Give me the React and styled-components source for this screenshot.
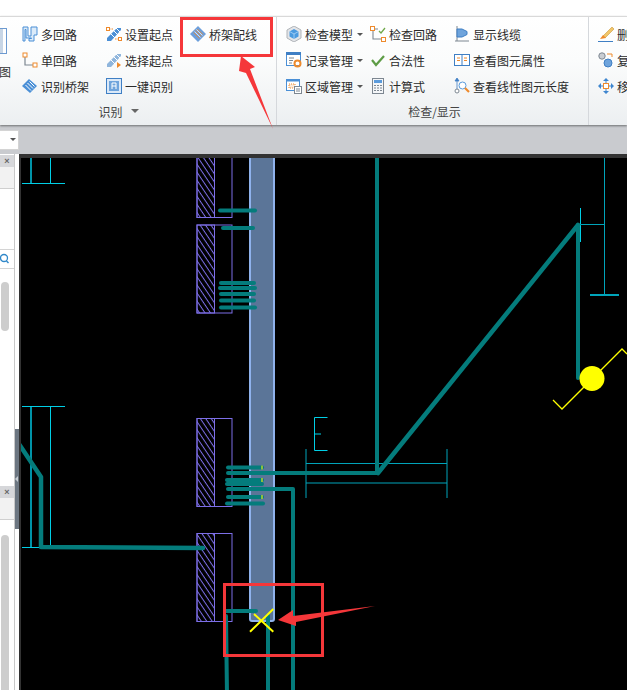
import React from "react";
import styled, { createGlobalStyle } from "styled-components";

const Global = createGlobalStyle`
  html, body {
    margin: 0;
    width: 627px;
    height: 690px;
    overflow: hidden;
    background: #fff;
    font-family: "Noto Sans CJK SC", "Liberation Sans", sans-serif;
  }
`;

const Page = styled.div`
  position: relative;
  width: 627px;
  height: 690px;
  overflow: hidden;
  display: flex;
  flex-direction: column;
`;
const TopStrip = styled.div`
  height: 16px;
  background: #fff;
`;
const Ribbon = styled.div`
  display: flex;
  flex: none;
  height: 109px;
  box-sizing: border-box;
  border-top: 1px solid #d9d9d9;
  background: linear-gradient(#ffffff, #fbfcfc 40%, #eceff1);
  box-shadow: 0 1px 2px rgba(0, 0, 0, 0.45);
  position: relative;
  z-index: 1;
`;
const Group = styled.div`
  flex: none;
  box-sizing: border-box;
  width: ${(p) => p.$width}px;
  padding-left: ${(p) => p.$pad}px;
  padding-top: 4px;
  display: flex;
  flex-direction: column;
  position: relative;
  border-right: ${(p) => (p.$last ? "none" : "1px solid #d5d8dc")};
`;
const Tools = styled.div`
  display: flex;
  height: 78px;
`;
const Big = styled.div`
  flex: none;
  width: 22px;
  margin-left: -22px;
  overflow: hidden;
  display: flex;
  flex-direction: column;
  align-items: flex-end;
`;
const BigBox = styled.div`
  width: 7px;
  height: 26px;
  margin: 7px 15px 0 0;
  box-sizing: border-box;
  border: 1px solid #6d9ad0;
  border-left: none;
  background: linear-gradient(90deg, #c8d6e6 0 3px, #fff 3px);
`;
const BigText = styled.div`
  width: 22px;
  font-size: 12px;
  line-height: 16px;
  margin-top: 10px;
  color: #333;
  text-indent: -1px;
`;
const Column = styled.div`
  flex: none;
  width: 84px;
  display: flex;
  flex-direction: column;
`;
const Item = styled.div`
  display: flex;
  align-items: center;
  height: 26px;
  gap: 3px;
  font-size: 12px;
  color: #2b2b2b;
  white-space: nowrap;
`;
const Caret = styled.span`
  width: 0;
  height: 0;
  margin-left: 1px;
  border-left: 3px solid transparent;
  border-right: 3px solid transparent;
  border-top: 3px solid #555;
`;
const GroupLabel = styled.div`
  display: flex;
  align-items: center;
  justify-content: center;
  gap: 7px;
  height: 20px;
  margin-top: 2px;
  margin-left: ${(p) => p.$shift || 0}px;
  font-size: 12px;
  color: #444;
  white-space: nowrap;
`;
const LabelCaret = styled(Caret)`
  border-left-width: 4px;
  border-right-width: 4px;
  border-top-width: 4px;
  border-top-color: #666;
`;
const Band = styled.div`
  flex: none;
  height: 29px;
  background: #c9cbcf;
  display: flex;
  align-items: center;
`;
const Combo = styled.div`
  width: 19px;
  height: 20px;
  box-sizing: border-box;
  background: #fff;
  border: 1px solid #d4d4d4;
  border-left: none;
  display: flex;
  align-items: center;
  justify-content: flex-end;
  padding-right: 2px;
`;
const Body = styled.div`
  flex: 1;
  min-height: 0;
  display: flex;
`;
const Sidebar = styled.div`
  flex: none;
  width: 15px;
  box-sizing: border-box;
  padding-top: 1px;
  border-right: 1px solid #c8c8c8;
  display: flex;
  flex-direction: column;
  background: #fff;
`;
const Panel = styled.div`
  flex: none;
  height: ${(p) => p.$height}px;
  overflow: hidden;
`;
const PanelHead = styled.div`
  height: 12px;
  background: #d6d7da;
  color: #666;
  font: bold 9px/12px "Liberation Sans", sans-serif;
  text-align: center;
`;
const PanelTabs = styled.div`
  height: 21px;
  background: #f2f2f2;
  border-bottom: 1px solid #cfcfcf;
`;
const PanelSearch = styled.div`
  margin-top: 60px;
  height: 18px;
  border-top: 1px solid #d4d4d4;
  border-bottom: 1px solid #d4d4d4;
  display: flex;
  align-items: center;
`;
const Thumb = styled.div`
  width: 8px;
  height: ${(p) => p.$height}px;
  margin: ${(p) => p.$top}px 0 0 1px;
  background: #cdcdcd;
  border-radius: 4px;
`;
const Splitter = styled.div`
  flex: none;
  width: 4px;
  background: #fff;
`;
const Handle = styled.div`
  width: 4px;
  height: 100px;
  margin-top: 275px;
  background: #6c7681;
  display: flex;
  align-items: center;
`;
const HandleArrow = styled.span`
  width: 0;
  height: 0;
  border-top: 3px solid transparent;
  border-bottom: 3px solid transparent;
  border-right: 3px solid #c6ccd2;
`;
const Canvas = styled.div`
  flex: 1;
  min-width: 0;
  border-top: 4px solid #333;
  border-left: 2px solid #333;
  background: #000;
`;
const Drawing = styled.svg`
  display: block;
`;
const Marks = styled.svg`
  position: absolute;
  left: 0;
  top: 0;
  z-index: 2;
  pointer-events: none;
`;

const Ico = ({ children }) => (
  <svg width="16" height="16" viewBox="0 0 16 16" fill="none" style={{ flex: "none" }}>
    {children}
  </svg>
);

const BLUE = "#4a8fd6";
const ORANGE = "#ee8a2c";
const GREY = "#7d8791";

const MultiLoop = () => (
  <Ico>
    <path d="M1 15V1h5v9h3V1h6v8h-3v6H7v-2.500h2.500V12H4V3.500H3V15z" fill="#dcebf9" stroke={BLUE} strokeWidth="1" />
  </Ico>
);
const SingleLoop = () => (
  <Ico>
    <path d="M3 5v8h8" stroke={GREY} strokeWidth="1.200" />
    <rect x="1" y="1" width="4" height="4" fill="#fff" stroke={ORANGE} />
    <rect x="11" y="11" width="4" height="4" fill="#fff" stroke={ORANGE} />
  </Ico>
);
const Tray = () => (
  <Ico>
    <path d="M0 8l7-7 8 7-7 7z" fill={BLUE} />
    <path d="M3.500 7l5.500 5.500M5.500 5l5.500 5.500M7.500 3.500l5 5" stroke="#fff" strokeWidth="1" />
  </Ico>
);
const SetStart = ({ pale }) => (
  <Ico>
    <path d="M1 12L11 2h4v2L5 15H1z" fill={pale ? "#8fb5dc" : BLUE} />
    <path d="M4 7l5 5M7 4l5 5M10 2l4 4" stroke="#fff" strokeWidth="1" />
    {pale ? (
      <path d="M11 10l4 3-4 3z" fill={ORANGE} />
    ) : (
      <>
        <path d="M3 3h4M9 13h4" stroke={ORANGE} strokeDasharray="1.500 1" />
        <rect x="0.500" y="1.500" width="3" height="3" fill="#fff" stroke={ORANGE} />
        <rect x="12.500" y="11.500" width="3" height="3" fill="#fff" stroke={ORANGE} />
      </>
    )}
  </Ico>
);
const OneKey = () => (
  <Ico>
    <rect x="0.500" y="0.500" width="15" height="15" fill="#dbe9f8" stroke="#3f7fc4" />
    <rect x="3" y="3" width="10" height="10" fill="#6fa4dc" />
    <path d="M6 11V5h4v6M6 8h4" stroke="#fff" strokeWidth="1" />
  </Ico>
);
const Wiring = () => (
  <Ico>
    <path d="M0 8l8-8 8 8-8 8z" fill="#6d9fdc" />
    <path d="M3.500 6.500l6 6M5.500 4.500l6 6M7.500 3l5.500 5.500" stroke={ORANGE} strokeWidth="0.800" />
    <path d="M4.500 5.500l6 6M6.500 3.500l6 6" stroke="#fff" strokeWidth="0.700" />
  </Ico>
);
const Model = () => (
  <Ico>
    <path d="M8 0l7 4v8l-7 4-7-4V4z" fill="#e3e5e8" stroke="#b0b4b9" />
    <path d="M8 3l4.500 2.500v5L8 13l-4.500-2.500v-5z" fill="#4c9be0" />
    <path d="M3.500 5.500L8 8l4.500-2.500M8 8v5" stroke="#bfe0fa" strokeWidth="0.700" />
  </Ico>
);
const Records = () => (
  <Ico>
    <rect x="0.500" y="0.500" width="14" height="13" fill="#fff" stroke="#4a8fd6" />
    <rect x="0" y="0" width="15" height="3" fill="#3f7fc4" />
    <path d="M3 6h5M3 8.500h4M3 11h3" stroke={GREY} />
    <circle cx="11.500" cy="11.500" r="3" fill="none" stroke={ORANGE} strokeWidth="2" />
  </Ico>
);
const Area = () => (
  <Ico>
    <rect x="0.500" y="1.500" width="13" height="11" fill="#fff" stroke="#4a8fd6" />
    <rect x="0" y="1" width="14" height="2.500" fill="#4a8fd6" />
    <rect x="3" y="6" width="6" height="4" fill="#fbe9d8" stroke={ORANGE} strokeDasharray="1 1" />
    <rect x="8.500" y="8.500" width="7" height="7" fill="#fff" stroke={GREY} />
    <path d="M10 11h4M10 13h4" stroke={GREY} />
  </Ico>
);
const CheckLoop = () => (
  <Ico>
    <path d="M3 4v9h9M5 3h3" stroke={GREY} strokeWidth="1.100" />
    <rect x="0.500" y="0.500" width="4" height="4" fill="#fff" stroke={ORANGE} />
    <rect x="11.500" y="11.500" width="4" height="4" fill="#fff" stroke={ORANGE} />
    <path d="M9 5l2 2 4-5" stroke="#6fa84a" strokeWidth="1.300" />
  </Ico>
);
const Valid = () => (
  <Ico>
    <path d="M2 8l4 5 8-9" stroke="#5e9c46" strokeWidth="2.200" />
  </Ico>
);
const Calc = () => (
  <Ico>
    <rect x="2.500" y="0.500" width="11" height="15" fill="#f4f6f8" stroke={GREY} />
    <rect x="4" y="2" width="8" height="3" fill="#5a9bdc" />
    <path d="M4 7.500h2M7 7.500h2M10 7.500h2M4 10h2M7 10h2M10 10h2M4 12.500h2M7 12.500h2M10 12.500h2" stroke={GREY} />
  </Ico>
);
const ShowCable = () => (
  <Ico>
    <path d="M1 15h14M3 0v15" stroke={GREY} />
    <path d="M3 3h5l5 2.500v3L8 11H3z" fill="#6fa4dc" stroke="#3f7fc4" />
  </Ico>
);
const Attrs = () => (
  <Ico>
    <rect x="0.500" y="2.500" width="15" height="11" fill="#fff" stroke="#3f7fc4" />
    <path d="M8 3v10" stroke="#3f7fc4" />
    <path d="M3 6h3M3 8.500h3M10 6h3M10 8.500h3" stroke={ORANGE} />
  </Ico>
);
const LineLen = () => (
  <Ico>
    <path d="M3 0l2 3H1zM3 3v9" stroke="#3f7fc4" fill="#3f7fc4" strokeWidth="0.800" />
    <circle cx="3" cy="13" r="2" fill="#fff" stroke={GREY} />
    <circle cx="8.500" cy="7.500" r="3.500" fill="#fff" stroke="#5a9bdc" />
    <path d="M11 10l4 4" stroke={ORANGE} strokeWidth="2.200" />
  </Ico>
);
const Brush = () => (
  <Ico>
    <path d="M5 10L14 1l2 2-9 9z" fill="#f1c66a" stroke="#c9983c" strokeWidth="0.600" />
    <path d="M2 13l3-4 3 3z" fill={ORANGE} />
    <path d="M0 15.500h15" stroke="#3f7fc4" />
  </Ico>
);
const Copy = () => (
  <Ico>
    <circle cx="4" cy="4" r="3.200" fill="#c9cdd2" stroke={GREY} />
    <circle cx="10" cy="11" r="4" fill="#6fa4dc" stroke="#3f7fc4" />
    <path d="M9 2h5v3" stroke={ORANGE} />
  </Ico>
);
const Move = () => (
  <Ico>
    <path d="M8 0l3 3H5zM8 16l-3-3h6zM0 8l3-3v6zM16 8l-3 3V5z" fill="#3f86cf" />
    <path d="M8 3v10M3 8h10" stroke="#3f86cf" />
    <rect x="5.500" y="5.500" width="5" height="5" fill="#fff" stroke={ORANGE} />
  </Ico>
);
const Lens = () => (
  <svg width="12" height="12" viewBox="0 0 12 12" fill="none">
    <circle cx="4" cy="5" r="3.500" stroke="#2f87c9" strokeWidth="1.300" />
    <path d="M6.500 8l2 2" stroke="#2f87c9" strokeWidth="1.500" />
  </svg>
);

const Tool = ({ icon: Glyph, text, caret, pale }) => (
  <Item>
    <Glyph pale={pale} />
    {text}
    {caret && <Caret />}
  </Item>
);

const identifyCols = [
  [
    { icon: MultiLoop, text: "多回路" },
    { icon: SingleLoop, text: "单回路" },
    { icon: Tray, text: "识别桥架" },
  ],
  [
    { icon: SetStart, text: "设置起点" },
    { icon: SetStart, text: "选择起点", pale: true },
    { icon: OneKey, text: "一键识别" },
  ],
  [{ icon: Wiring, text: "桥架配线" }],
];
const checkCols = [
  [
    { icon: Model, text: "检查模型", caret: true },
    { icon: Records, text: "记录管理", caret: true },
    { icon: Area, text: "区域管理", caret: true },
  ],
  [
    { icon: CheckLoop, text: "检查回路" },
    { icon: Valid, text: "合法性" },
    { icon: Calc, text: "计算式" },
  ],
  [
    { icon: ShowCable, text: "显示线缆" },
    { icon: Attrs, text: "查看图元属性" },
    { icon: LineLen, text: "查看线性图元长度" },
  ],
];
const commonCols = [
  [
    { icon: Brush, text: "删除" },
    { icon: Copy, text: "复制" },
    { icon: Move, text: "移动" },
  ],
];

const renderCols = (cols) =>
  cols.map((col, i) => (
    <Column key={i}>
      {col.map((t) => (
        <Tool key={t.text} {...t} />
      ))}
    </Column>
  ));

const TEAL = "#047c7c";
const CYAN = "#00cfe6";
const DIM = "#00a4ba";
const VIOLET = "#7d6fe8";

// short wires that hang off the tray
const stubs = [
  [220, 255, 210.5],
  [223, 253, 228],
  [221, 254, 283],
  [220, 255, 288],
  [221, 254, 294],
  [221, 254, 300.5],
  [221, 255, 307.5],
  [228, 262, 467.5],
  [227, 262, 480],
  [227, 262, 484],
  [228, 262, 497],
  [227, 263, 503.5],
  [226, 256, 611],
];
const hatchBoxes = [
  [150, 217.5],
  [225, 313],
  [418.5, 506.5],
  [533.5, 621.5],
];

const CadDrawing = () => (
  <Drawing width="606" height="532" viewBox="21 158 606 532" fill="none">
    <defs>
      <pattern id="hatch" width="4.500" height="4.500" patternUnits="userSpaceOnUse" patternTransform="rotate(56)">
        <path d="M0 0.500H4.500" stroke={VIOLET} strokeWidth="1" />
      </pattern>
    </defs>

    {/* tray */}
    <rect x="250" y="150" width="24" height="471" rx="2" fill="#5b7598" stroke="#8fb2ec" strokeWidth="2" />

    {/* wall blocks */}
    {hatchBoxes.map(([y1, y2]) => (
      <g key={y1} stroke={VIOLET}>
        <rect x="197" y={y1} width="17.500" height={y2 - y1} fill="url(#hatch)" />
        <rect x="197" y={y1} width="35" height={y2 - y1} />
      </g>
    ))}

    {/* dimension lines */}
    <g stroke={CYAN}>
      <path d="M22 183.500H65M50.500 158V183M22 406.500H65M50.500 407V547M22 547.500H40" />
      <path d="M327.500 417.500H314.500V450.500H327.500M314.500 434H321" />
      <path d="M306 449V498M447 449V498M306 463.500H447M306 483H447" stroke={DIM} />
      <path d="M580.500 208V242" />
      <path d="M580 224.500H604.500M604.500 158V295" stroke={DIM} />
      <path d="M590 295H619" stroke={DIM} strokeWidth="2" />
    </g>
    <path d="M31 158V183M31 407V547" stroke="#0093a8" strokeWidth="2" />

    {/* wires */}
    <g stroke={TEAL} strokeWidth="4" strokeLinecap="round" strokeLinejoin="round">
      {stubs.map(([x1, x2, y]) => (
        <path key={y} d={`M${x1} ${y}H${x2}`} />
      ))}
      <path d="M377 158V473H228" />
      <path d="M378 473L578 225" strokeWidth="4.500" />
      <path d="M578 225V378" />
      <path d="M228 489H293V695" />
      <path d="M15 438L41 477V547L203 548" strokeWidth="4.500" />
      <path d="M226 616L227 695M268 616V695" />
    </g>

    {/* ticks and grip point */}
    <g stroke="#b6d62a" strokeWidth="1.500">
      <path d="M262 465.500V469.500M262 478V482M262 495V499" />
    </g>
    <path d="M250 631.700L273.300 609M254 614L273.300 631.700" stroke="#ffff00" strokeWidth="2" />
    <path d="M553 400L562 409L622 349L627 354" stroke="#ffff00" strokeWidth="1.300" />
    <circle cx="592" cy="378.500" r="12.500" fill="#ffff00" />
  </Drawing>
);

export default function App() {
  return (
    <>
      <Global />
      <Page>
        <TopStrip />
        <Ribbon>
          <Group $width={277} $pad={22}>
            <Tools>
              <Big>
                <BigBox />
                <BigText>图</BigText>
              </Big>
              {renderCols(identifyCols)}
            </Tools>
            <GroupLabel $shift={-61}>
              识别
              <LabelCaret />
            </GroupLabel>
          </Group>
          <Group $width={312} $pad={9}>
            <Tools>{renderCols(checkCols)}</Tools>
            <GroupLabel $shift={-5}>检查/显示</GroupLabel>
          </Group>
          <Group $width={120} $pad={9} $last>
            <Tools>{renderCols(commonCols)}</Tools>
            <GroupLabel>通用操作</GroupLabel>
          </Group>
        </Ribbon>
        <Band>
          <Combo>
            <Caret />
          </Combo>
        </Band>
        <Body>
          <Sidebar>
            <Panel $height={331}>
              <PanelHead>×</PanelHead>
              <PanelTabs />
              <PanelSearch>
                <Lens />
              </PanelSearch>
              <Thumb $top={13} $height={49} />
            </Panel>
            <Panel $height={204}>
              <PanelHead>×</PanelHead>
              <PanelTabs />
              <Thumb $top={15} $height={170} />
            </Panel>
          </Sidebar>
          <Splitter>
            <Handle>
              <HandleArrow />
            </Handle>
          </Splitter>
          <Canvas>
            <CadDrawing />
          </Canvas>
        </Body>

        {/* red review marks drawn over the screenshot */}
        <Marks width="627" height="690" viewBox="0 0 627 690" fill="none">
          <rect x="181.500" y="18.500" width="90" height="37" stroke="#f5373a" strokeWidth="3" />
          <path d="M241 56L255 67L250 69L273 129L246 73L239 71Z" fill="#f5373a" />
          <rect x="224.500" y="584.500" width="98" height="71" stroke="#f5373a" strokeWidth="3" />
          <path d="M278 620L293 610L293 616L375 606L296 622L296 626Z" fill="#f5373a" />
        </Marks>
      </Page>
    </>
  );
}
